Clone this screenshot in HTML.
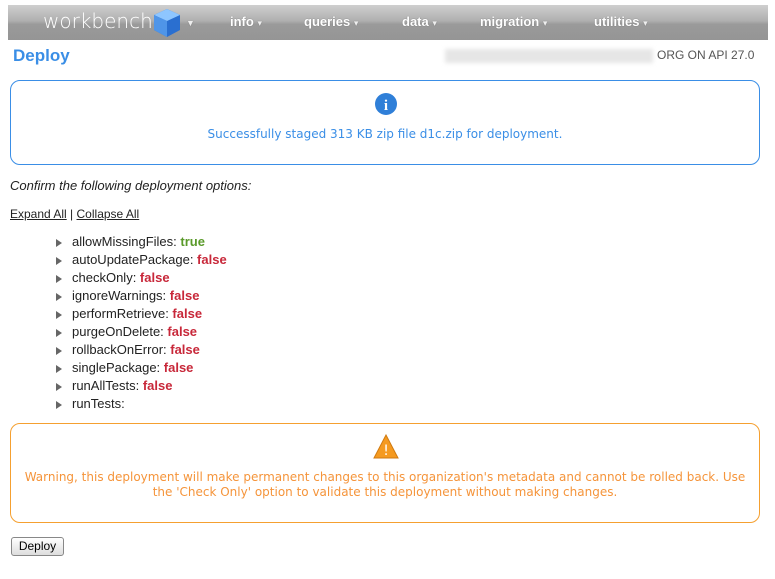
<!DOCTYPE html>
<html><head><style>
body{margin:0;width:775px;height:579px;background:#fff;font-family:"Liberation Sans",sans-serif;position:relative;overflow:hidden}
.nav{position:absolute;left:8px;top:5px;width:760px;height:35px;background:linear-gradient(#cfcfcf 0%,#b0b0b0 45%,#9a9a9a 55%,#959595 100%)}
.nav span{position:absolute;top:9px;color:#fff;font-weight:bold;font-size:13px;text-shadow:0 0 1px #666}
.nav .c{color:#eee;font-size:9px;font-weight:normal}
.logo{position:absolute;left:35px;top:4px;font-size:20px;color:#fff;letter-spacing:0;font-family:"DejaVu Sans",sans-serif;font-weight:200}
.box{position:absolute;left:10px;width:748px;border-radius:10px;text-align:center;font-size:12px;font-family:"DejaVu Sans",sans-serif}
.li{position:absolute;left:72px;font-size:13px;color:#222}
.li:before{content:"";position:absolute;left:-16px;top:5px;border-left:6px solid #666;border-top:4px solid transparent;border-bottom:4px solid transparent}
.f{color:#c8283a;font-weight:bold}.t{color:#5a9a2a;font-weight:bold}
</style></head><body>
<div class="nav">
<div class="logo">workbench</div>
<svg style="position:absolute;left:145px;top:3px" width="28" height="30" viewBox="0 0 28 30"><polygon points="14,1 27,7 27,22 14,29 1,22 1,7" fill="#2a6fd0"/><polygon points="14,1 27,7 14,13 1,7" fill="#8ec6ff"/><polygon points="1,7 14,13 14,29 1,22" fill="#4f95e8"/></svg>
<span class="c" style="left:178px;top:13px">▼</span>
<span style="left:222px">info <b class="c">▾</b></span>
<span style="left:296px">queries <b class="c">▾</b></span>
<span style="left:394px">data <b class="c">▾</b></span>
<span style="left:472px">migration <b class="c">▾</b></span>
<span style="left:586px">utilities <b class="c">▾</b></span>
</div>
<div style="position:absolute;left:13px;top:46px;font-size:17px;font-weight:bold;color:#3a8ee6">Deploy</div>
<div style="position:absolute;left:445px;top:49px;width:208px;height:14px;background:#e6e6e6;filter:blur(2px)"></div>
<div style="position:absolute;left:657px;top:48px;font-size:12px;color:#555">ORG ON API 27.0</div>
<div class="box" style="top:80px;height:83px;border:1px solid #3a8ee6">
<svg style="position:absolute;left:363px;top:11px" width="24" height="24"><circle cx="12" cy="12" r="11" fill="#2f7fd8"/><text x="12" y="18" text-anchor="middle" fill="#fff" font-weight="bold" font-size="15" font-family="Liberation Serif">i</text></svg>
<div style="position:absolute;left:0;right:0;top:46px;color:#3a8ee6">Successfully staged 313 KB zip file d1c.zip for deployment.</div>
</div>
<div style="position:absolute;left:10px;top:178px;font-size:13px;font-style:italic;color:#222">Confirm the following deployment options:</div>
<div style="position:absolute;left:10px;top:207px;font-size:12px;color:#222"><u>Expand All</u> | <u>Collapse All</u></div>
<div class="li" style="top:234px">allowMissingFiles: <span class="t">true</span></div>
<div class="li" style="top:252px">autoUpdatePackage: <span class="f">false</span></div>
<div class="li" style="top:270px">checkOnly: <span class="f">false</span></div>
<div class="li" style="top:288px">ignoreWarnings: <span class="f">false</span></div>
<div class="li" style="top:306px">performRetrieve: <span class="f">false</span></div>
<div class="li" style="top:324px">purgeOnDelete: <span class="f">false</span></div>
<div class="li" style="top:342px">rollbackOnError: <span class="f">false</span></div>
<div class="li" style="top:360px">singlePackage: <span class="f">false</span></div>
<div class="li" style="top:378px">runAllTests: <span class="f">false</span></div>
<div class="li" style="top:396px">runTests:</div>
<div class="box" style="top:423px;height:98px;border:1px solid #f5a030">
<svg style="position:absolute;left:362px;top:10px" width="26" height="26"><polygon points="13,1 25,24 1,24" fill="#f59a20" stroke="#d07a10"/><text x="13" y="21" text-anchor="middle" fill="#fff" font-size="14">!</text></svg>
<div style="position:absolute;left:0;right:0;top:46px;color:#f5943a;line-height:15px;white-space:nowrap">Warning, this deployment will make permanent changes to this organization's metadata and cannot be rolled back. Use<br>the 'Check Only' option to validate this deployment without making changes.</div>
</div>
<div style="position:absolute;left:11px;top:537px;width:51px;height:17px;border:1px solid #888;border-radius:3px;background:linear-gradient(#fff,#ddd);font-size:12px;text-align:center;line-height:17px">Deploy</div>
</body></html>
